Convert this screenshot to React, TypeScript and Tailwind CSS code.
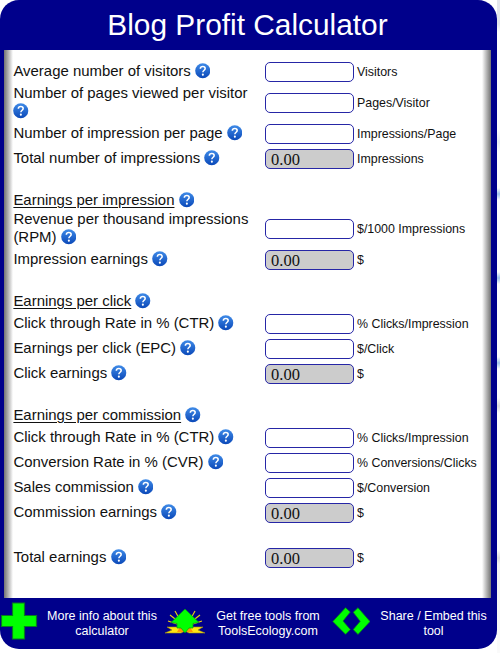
import React from "react";

function Help() {
  return (
    <svg viewBox="0 0 16 16" className="inline-block h-[15.5px] w-[15.5px] align-[-2.5px]">
      <defs>
        <linearGradient id="helpBlue" x1="0" y1="0" x2="0" y2="1">
          <stop offset="0" stopColor="#3f8be8" />
          <stop offset="1" stopColor="#0a48b8" />
        </linearGradient>
      </defs>
      <circle cx="8" cy="8" r="7.8" fill="url(#helpBlue)" />
      <path d="M5.500 5.900C5.600 4.500 6.600 3.700 8 3.700C9.500 3.700 10.500 4.500 10.500 5.800C10.500 7.500 8.200 7.500 8.100 9.600" fill="none" stroke="#fff" strokeWidth="1.600" />
      <circle cx="8.100" cy="12" r="1.100" fill="#fff" />
    </svg>
  );
}

type RowProps = { label: string; unit: string; result?: boolean; size?: string };

function Row({ label, unit, result, size = "h-[25px]" }: RowProps) {
  return (
    <div className={`flex items-center ${size}`}>
      <div className="w-[252px] shrink-0 pr-3 pb-px pl-[0.4px] text-[14.950px] leading-[18px]">
        {label} <Help />
      </div>
      {result ? (
        <output className="flex h-5 w-[89px] shrink-0 items-center rounded-[5px] border border-[#2626a6] bg-[#ccc] pt-[4px] pl-[5px] font-['Liberation_Serif',serif] text-[16.500px] leading-none">
          0.00
        </output>
      ) : (
        <input className="h-5 w-[89px] shrink-0 rounded-[5px] border border-[#2626a6] bg-white px-[5px]" />
      )}
      <span className="pt-[2px] pl-[3px] text-[12.400px] whitespace-nowrap">{unit}</span>
    </div>
  );
}

function Heading({ children, size }: { children: string; size: string }) {
  return (
    <h2 className={`pt-px pl-[0.4px] text-[14.950px] leading-[20px] ${size}`}>
      <span className="underline underline-offset-2">{children}</span> <Help />
    </h2>
  );
}

export default function App() {
  return (
    <div className="flex h-[653px] w-[500px] overflow-hidden bg-white font-['Liberation_Sans',Arial,sans-serif] text-[#111]">
      <main className="flex h-[649px] w-[497px] shrink-0 flex-col overflow-hidden rounded-[19px] bg-[#00008b]">
        <h1 className="h-[50px] pr-[2px] text-center text-[29.850px] leading-[49px] text-white">Blog Profit Calculator</h1>
        <section className="mr-[6px] ml-[4px] flex h-[548px] bg-white">
          <div className="w-[9px] shrink-0 bg-linear-to-r from-[#737373] to-white" />
          <div className="w-[469px] shrink-0 pt-[9px]">
            <Row label="Average number of visitors" unit="Visitors" />
            <Row label="Number of pages viewed per visitor" unit="Pages/Visitor" size="h-[37px]" />
            <Row label="Number of impression per page" unit="Impressions/Page" />
            <Row label="Total number of impressions" unit="Impressions" result />
            <Heading size="mt-[18px] h-[21px]">Earnings per impression</Heading>
            <Row label="Revenue per thousand impressions (RPM)" unit="$/1000 Impressions" size="h-[37px]" />
            <Row label="Impression earnings" unit="$" result />
            <Heading size="mt-[18px] h-[21px]">Earnings per click</Heading>
            <Row label="Click through Rate in % (CTR)" unit="% Clicks/Impression" />
            <Row label="Earnings per click (EPC)" unit="$/Click" />
            <Row label="Click earnings" unit="$" result />
            <Heading size="mt-[18px] h-[21px]">Earnings per commission</Heading>
            <Row label="Click through Rate in % (CTR)" unit="% Clicks/Impression" />
            <Row label="Conversion Rate in % (CVR)" unit="% Conversions/Clicks" />
            <Row label="Sales commission" unit="$/Conversion" />
            <Row label="Commission earnings" unit="$" result />
            <div className="h-5" />
            <Row label="Total earnings" unit="$" result />
          </div>
          <div className="w-[9px] shrink-0 bg-linear-to-l from-[#737373] to-white" />
        </section>
        <footer className="flex h-[51px] text-center text-[12.500px] leading-[15px] text-white">
          <a className="flex w-[166px]">
            <svg viewBox="0 0 38 38" className="mt-[4px] h-[38px] w-[38px] shrink-0">
              <path d="M12.500 1h12v12.500h12v11h-12V37h-12V24.500h-11v-11h11z" fill="#0f0" stroke="#087a20" strokeWidth="1.200" />
            </svg>
            <span className="w-[128px] pt-[11px]">More info about this<br />calculator</span>
          </a>
          <a className="flex w-[165px]">
            <svg viewBox="0 0 40 26" className="mt-[10px] -ml-[1px] h-[26px] w-[40px] shrink-0">
              <g stroke="#e8c818" strokeWidth="1.200">
                <path d="M5 7l9 7M3 13l9 3M35 7l-9 7M37 13l-9 3M10 3l5 9M30 3l-5 9" />
              </g>
              <path d="M0 25l7-3-5-3h10l8-2 8 2h10l-5 3 7 3H24l-4-2-4 2z" fill="#ffe610" stroke="#a09010" strokeWidth=".6" />
              <path d="M12 24l3-5 4 5zM21 24l4-5 3 5z" fill="#ff9800" />
              <path d="M20 1l14 13.500-6 1v4.500h-4l-4 5-4-5h-4v-4.500l-6-1z" fill="#0f0" stroke="#078c18" strokeWidth=".7" />
            </svg>
            <span className="w-[126px] pt-[11px]">Get free tools from<br />ToolsEcology.com</span>
          </a>
          <a className="flex w-[166px]">
            <svg viewBox="0 0 38 28" className="mt-[9px] ml-[1px] h-[28px] w-[38px] shrink-0">
              <g fill="#0f0" stroke="#087a20" strokeWidth=".8">
                <path d="M13.500.700l4.800 4.300-7.300 9 7.300 8.500-4.800 4.800L.800 14.500z" />
                <path d="M26 .700l-4.800 4.600 7 9-7 8.300 4.800 4.800L38 14.500z" />
              </g>
            </svg>
            <span className="w-[128px] pt-[11px]">Share / Embed this<br />tool</span>
          </a>
        </footer>
      </main>
      <div className="w-[3px] bg-[linear-gradient(#e4e6ec_0px,#e4e6ec_24px,#fff_32px,#fff_130px,#e9eef6_142px,#fff_152px,#fff_188px,#9fc4ec_194px,#fff_200px,#fff_272px,#9fc4ec_278px,#fff_284px,#fff_357px,#9fc4ec_363px,#fff_369px,#fff_398px,#ddd_406px,#fff_413px,#fff_550px,#ddd_558px,#f4f4f4_564px,#fafafa_653px)]" />
    </div>
  );
}
